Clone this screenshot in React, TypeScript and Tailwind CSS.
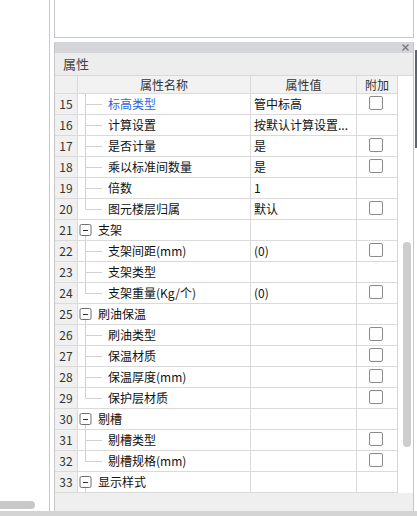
import React from "react";

type Row = {
  n: number;
  kind: "child" | "last" | "group";
  name: string;
  value?: string;
  cb?: boolean;
  blue?: boolean;
};

const rows: Row[] = [
  { n: 15, kind: "child", name: "标高类型", value: "管中标高", cb: true, blue: true },
  { n: 16, kind: "child", name: "计算设置", value: "按默认计算设置..." },
  { n: 17, kind: "child", name: "是否计量", value: "是", cb: true },
  { n: 18, kind: "child", name: "乘以标准间数量", value: "是", cb: true },
  { n: 19, kind: "child", name: "倍数", value: "1" },
  { n: 20, kind: "last", name: "图元楼层归属", value: "默认", cb: true },
  { n: 21, kind: "group", name: "支架" },
  { n: 22, kind: "child", name: "支架间距(mm)", value: "(0)", cb: true },
  { n: 23, kind: "child", name: "支架类型" },
  { n: 24, kind: "last", name: "支架重量(Kg/个)", value: "(0)", cb: true },
  { n: 25, kind: "group", name: "刷油保温" },
  { n: 26, kind: "child", name: "刷油类型", cb: true },
  { n: 27, kind: "child", name: "保温材质", cb: true },
  { n: 28, kind: "child", name: "保温厚度(mm)", cb: true },
  { n: 29, kind: "last", name: "保护层材质", cb: true },
  { n: 30, kind: "group", name: "剔槽" },
  { n: 31, kind: "child", name: "剔槽类型", cb: true },
  { n: 32, kind: "last", name: "剔槽规格(mm)", cb: true },
  { n: 33, kind: "group", name: "显示样式" },
];

function Connector({ kind }: { kind: Row["kind"] }) {
  if (kind === "group") {
    return (
      <svg width="20" height="20" className="shrink-0 block">
        <line x1="7.5" y1="15.5" x2="7.5" y2="20" stroke="#d0d0d0" strokeWidth="1" />
        <rect x="2" y="4.5" width="11" height="11" rx="1.5" fill="#fff" stroke="#6f6f6f" strokeWidth="1" />
        <line x1="5" y1="10.5" x2="10" y2="10.5" stroke="#333" strokeWidth="1" />
      </svg>
    );
  }
  return (
    <svg width="30" height="20" className="shrink-0 block">
      <line x1="7.5" y1="0" x2="7.5" y2={kind === "last" ? 10.5 : 20} stroke="#d0d0d0" strokeWidth="1" />
      <line x1="7.5" y1="10.5" x2="24" y2="10.5" stroke="#d0d0d0" strokeWidth="1" />
    </svg>
  );
}

function TableRow({ r }: { r: Row }) {
  return (
    <div className="flex h-[21px] border-b border-[#dadada]">
      <div className="w-[23px] shrink-0 bg-[#f0f0f0] border-r border-[#dadada] flex items-center justify-center text-[12px] text-[#333]">
        {r.n}
      </div>
      <div className="w-[173px] shrink-0 border-r border-[#dadada] flex items-center">
        <Connector kind={r.kind} />
        <span className={`text-[12px] leading-none whitespace-nowrap ${r.blue ? "text-[#2f62dd]" : "text-[#111]"}`}>
          {r.name}
        </span>
      </div>
      <div className="w-[106px] shrink-0 border-r border-[#dadada] flex items-center pl-[3px] text-[12px] text-[#111] whitespace-nowrap overflow-hidden">
        {r.value ?? ""}
      </div>
      <div className="w-[40px] shrink-0 flex items-start pt-[2px] pl-[12px]">
        {r.cb && <div className="w-[14px] h-[14px] border border-[#8a8a8a] rounded-[2px] bg-white" />}
      </div>
    </div>
  );
}

export default function App() {
  return (
    <div className="w-[417px] h-[516px] bg-white flex flex-col overflow-hidden font-['Noto_Sans_CJK_SC','Microsoft_YaHei',sans-serif]">
      <div className="flex flex-1 min-h-0">
        {/* left panel */}
        <div className="w-[50px] shrink-0 border-r border-[#c9c9c9] flex flex-col justify-end pb-[2px]">
          <div className="w-[35px] h-[8px] rounded-r-full bg-[#c8c8c8]" />
        </div>
        <div className="w-[4px] shrink-0" />
        {/* right column */}
        <div className="w-[360px] shrink-0 flex flex-col">
          <div className="h-[38px] border-x border-b border-[#c6c6c6] bg-white" />
          <div className="h-[4px]" />
          <div className="flex-1 flex flex-col border-x border-[#c6c6c6] min-h-0">
            {/* title bar */}
            <div className="h-[11px] bg-[#d5d6da] flex items-center justify-end pr-[4px]">
              <svg width="7" height="7" className="block">
                <path d="M0.5 0.5 L6.5 6.5 M6.5 0.5 L0.5 6.5" stroke="#7a7a7a" strokeWidth="1.4" />
              </svg>
            </div>
            {/* 属性 label */}
            <div className="h-[23px] bg-[#ededed] border-b border-[#d9d9d9] flex items-center pl-[8px] text-[13px] text-[#444]">
              属性
            </div>
            {/* table + scroll column */}
            <div className="flex">
              <div className="w-[342px] shrink-0 flex flex-col">
                <div className="flex h-[18px] border-b border-[#dadada] bg-[#f2f2f2] text-[12px] text-[#333]">
                  <div className="w-[23px] shrink-0 bg-[#f0f0f0] border-r border-[#dadada]" />
                  <div className="w-[173px] shrink-0 border-r border-[#dadada] flex items-center justify-center">属性名称</div>
                  <div className="w-[106px] shrink-0 border-r border-[#dadada] flex items-center justify-center">属性值</div>
                  <div className="w-[40px] shrink-0 flex items-center justify-center">附加</div>
                </div>
                {rows.map((r) => (
                  <TableRow key={r.n} r={r} />
                ))}
              </div>
              <div className="flex-1 border-l border-[#d6d6d6] bg-white pl-[5px]">
                <div className="mt-[166px] w-[8px] h-[205px] rounded-full bg-[#cdcdcd]" />
              </div>
            </div>
            <div className="flex-1 bg-[#efefef]" />
          </div>
        </div>
        {/* right edge strip */}
        <div className="flex-1 flex flex-col pl-[1px] pt-[50px]">
          <div className="h-[98px] w-[2px] bg-[#5d6570]" />
        </div>
      </div>
      <div className="h-[5px] bg-[#d4d4d4]" />
    </div>
  );
}
